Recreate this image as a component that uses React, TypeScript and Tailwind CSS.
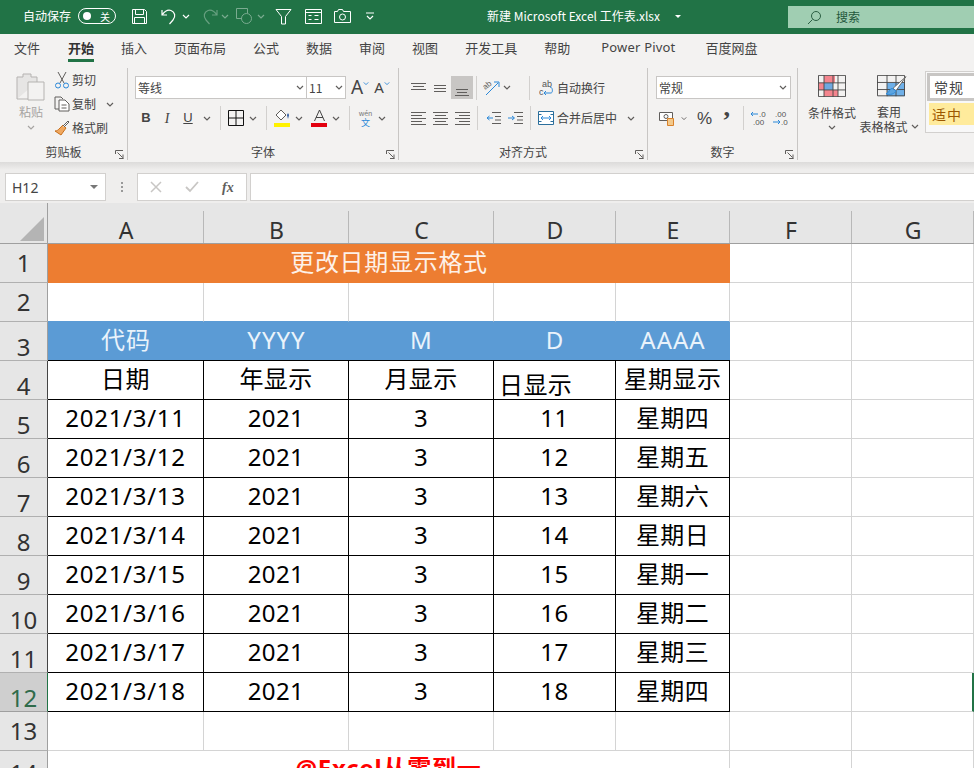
import React from "react";

const font = { fontFamily: '"Noto Sans CJK SC", "Noto Sans", sans-serif' };

const tabs = ["文件", "开始", "插入", "页面布局", "公式", "数据", "审阅", "视图", "开发工具", "帮助"];

const rows = [
  ["2021/3/11", "2021", "3", "11", "星期四"],
  ["2021/3/12", "2021", "3", "12", "星期五"],
  ["2021/3/13", "2021", "3", "13", "星期六"],
  ["2021/3/14", "2021", "3", "14", "星期日"],
  ["2021/3/15", "2021", "3", "15", "星期一"],
  ["2021/3/16", "2021", "3", "16", "星期二"],
  ["2021/3/17", "2021", "3", "17", "星期三"],
  ["2021/3/18", "2021", "3", "18", "星期四"],
];

function Chevron({ className = "", color = "#605e5c" }: { className?: string; color?: string }) {
  return (
    <svg width="8" height="5" viewBox="0 0 8 5" className={className}>
      <path d="M1 1l3 3 3-3" fill="none" stroke={color} strokeWidth="1.2" />
    </svg>
  );
}

function Launcher() {
  return (
    <svg width="9" height="9" viewBox="0 0 9 9" className="absolute right-[3px] top-[7px]">
      <path d="M.5 4V.5H8M8.5 8.5H4M2.5 2.5l5 5M8 4.5v4" fill="none" stroke="#605e5c" strokeWidth="1" />
    </svg>
  );
}

function Group({ width, label, children }: { width: string; label?: string; children: React.ReactNode }) {
  return (
    <div className={`${width} h-[92px] shrink-0 flex flex-col border-r border-[#c8c6c4]`}>
      <div className="h-[75px]">{children}</div>
      <div className="relative h-[17px] flex items-center justify-center text-[12px] text-[#444]">
        {label}
        <Launcher />
      </div>
    </div>
  );
}

function VSep({ className = "" }: { className?: string }) {
  return <div className={`w-px h-[24px] bg-[#d2d0ce] shrink-0 ${className}`} />;
}

// horizontal line icons for the alignment group
function Lines({ lines, className = "" }: { lines: number[][]; className?: string }) {
  return (
    <svg width="16" height="16" viewBox="0 0 16 16" className={`shrink-0 ${className}`}>
      {lines.map(([a, b, y], i) => (
        <path key={i} d={`M${a} ${y + 0.5}H${b}`} stroke="#605e5c" strokeWidth="1" />
      ))}
    </svg>
  );
}

function Indent({ flip = false, className = "" }: { flip?: boolean; className?: string }) {
  return (
    <svg width="16" height="14" viewBox="0 0 16 14" className={className}>
      <path d="M6 1.5h9M9 5.5h6M9 9h6M6 12.5h9" stroke="#605e5c" />
      {flip ? (
        <path d="M0 7h6M4 5l2.500 2L4 9" fill="none" stroke="#2b88d8" />
      ) : (
        <path d="M7 7H1M3.500 5L1 7l2.500 2" fill="none" stroke="#2b88d8" />
      )}
    </svg>
  );
}

function TitleBar() {
  return (
    <div className="h-[34px] bg-[#217346] flex items-center pb-[2px] text-white text-[12px] shrink-0">
      <span className="ml-[23px] w-[48px]">自动保存</span>
      <div className="ml-[7px] w-[38px] h-[16px] rounded-full border border-white flex items-center justify-between pl-[4px] pr-[5px]">
        <div className="w-[8px] h-[8px] rounded-full bg-white" />
        <span className="text-[10px]">关</span>
      </div>
      <svg width="17" height="17" viewBox="0 0 17 17" className="ml-[15px]">
        <path d="M1.500 1.500h12l2 2v12h-14zM4.500 1.500v5h8v-5M3.500 15.500v-6h10v6" fill="none" stroke="#fff" />
      </svg>
      <svg width="17" height="17" viewBox="0 0 17 17" className="ml-[13px]">
        <path d="M1 2v5h5M1.500 6.500C4 3 7 1.500 10 2.500c4 1.500 5 6 2 9.500l-3.500 4" fill="none" stroke="#fff" strokeWidth="1.200" />
      </svg>
      <Chevron className="ml-[4px]" color="#fff" />
      <svg width="17" height="17" viewBox="0 0 17 17" className="ml-[11px] opacity-40">
        <path d="M16 2v5h-5M15.500 6.500C13 3 10 1.500 7 2.500c-4 1.500-5 6-2 9.500l3.500 4" fill="none" stroke="#cfe3d7" strokeWidth="1.200" />
      </svg>
      <Chevron className="ml-[3px] opacity-40" color="#fff" />
      <svg width="18" height="18" viewBox="0 0 18 18" className="ml-[6px] opacity-40">
        <path d="M7 11.500H1.500V1.500h11V6" fill="none" stroke="#fff" />
        <circle cx="11.500" cy="11.500" r="5" fill="none" stroke="#fff" />
      </svg>
      <Chevron className="ml-[4px] opacity-40" color="#fff" />
      <svg width="17" height="17" viewBox="0 0 17 17" className="ml-[10px]">
        <path d="M1 1.500h15l-5.500 7v7.500h-4V8.500z" fill="none" stroke="#fff" />
      </svg>
      <svg width="17" height="15" viewBox="0 0 17 15" className="ml-[13px]">
        <path d="M.5.500h16v14H.5zM.5 3.500h16M3.500 6.500h3M3.500 10.500h3M9.500 6.500h4M9.500 10.500h4" fill="none" stroke="#fff" />
      </svg>
      <svg width="17" height="14" viewBox="0 0 17 14" className="ml-[12px]">
        <path d="M.5 2.500h3l1-2h4l1 2h7v11H.5z" fill="none" stroke="#fff" />
        <circle cx="8.500" cy="8" r="3" fill="none" stroke="#fff" />
      </svg>
      <svg width="8" height="9" viewBox="0 0 8 9" className="ml-[15px]">
        <path d="M0 1h8M1 4l3 3 3-3" fill="none" stroke="#fff" strokeWidth="1.200" />
      </svg>
      <span className="ml-[113px] w-[182px] -mt-[1px] whitespace-nowrap">新建 Microsoft Excel 工作表.xlsx</span>
      <svg width="6" height="3" viewBox="0 0 6 3" className="ml-[6px]">
        <path d="M0 0h6L3 3z" fill="#fff" />
      </svg>
      <div className="ml-[107px] mt-[2px] flex-1 h-[22px] bg-[#a0ceb2] flex items-center text-[#24583c]">
        <svg width="15" height="15" viewBox="0 0 15 15" className="ml-[19px]">
          <circle cx="9" cy="6" r="4.500" fill="none" stroke="#2b5f43" />
          <path d="M5.500 9.500L1 14" stroke="#2b5f43" />
        </svg>
        <span className="ml-[14px]">搜索</span>
      </div>
    </div>
  );
}

function TabRow() {
  return (
    <div className="h-[32px] bg-[#f3f2f1] flex items-start pl-[14px] gap-[27px] pt-[4px] text-[13px] text-[#444] shrink-0">
      {tabs.map((t) => (
        <div key={t} className={t === "开始" ? "ml-px h-[24px] border-b-[3px] border-[#217346] font-bold text-[#333]" : "h-[24px]"}>
          {t}
        </div>
      ))}
      <span className="ml-[4px] tracking-[0.2px] whitespace-nowrap" style={{ fontFamily: '"Noto Sans", sans-serif' }}>
        Power Pivot
      </span>
      <span className="ml-[3px]">百度网盘</span>
    </div>
  );
}

function Clipboard() {
  return (
    <Group width="w-[128px]" label="剪贴板">
      <div className="flex pl-[15px] pt-[3px]">
        <div className="w-[32px] flex flex-col items-center text-[12px] text-[#a6a4a2]">
          <svg width="32" height="32" viewBox="0 0 32 32">
            <path d="M2 28V6h6V3h8v3h6v5" fill="#e6e5e4" stroke="#b5b3b1" />
            <path d="M13 11h16v18H13z" fill="#f3f2f1" stroke="#b5b3b1" />
            <path d="M2 28h11" stroke="#b5b3b1" />
          </svg>
          <span>粘贴</span>
          <Chevron className="mt-[4px]" color="#a6a4a2" />
        </div>
        <div className="ml-[7px] -mt-[3px] flex flex-col text-[12px] text-[#444]">
          <div className="h-[24px] flex items-center">
            <svg width="16" height="18" viewBox="0 0 16 18">
              <path d="M4 1l6 11M12 1L6 12" stroke="#605e5c" />
              <circle cx="4" cy="14.500" r="2.500" fill="none" stroke="#2b88d8" />
              <circle cx="12" cy="14.500" r="2.500" fill="none" stroke="#2b88d8" />
            </svg>
            <span className="ml-[2px]">剪切</span>
          </div>
          <div className="h-[24px] flex items-center">
            <svg width="16" height="16" viewBox="0 0 16 16">
              <path d="M5 13H1V1h6l2 2" fill="none" stroke="#605e5c" />
              <path d="M5 4h6l4 4v7H5z" fill="#fff" stroke="#605e5c" />
              <path d="M7.500 9h5M7.500 12h5" stroke="#605e5c" />
            </svg>
            <span className="ml-[2px]">复制</span>
            <Chevron className="ml-[10px]" />
          </div>
          <div className="h-[24px] flex items-center">
            <svg width="16" height="16" viewBox="0 0 16 16">
              <path d="M9 5l3 3-5 7-6-4c2 0 3-1 4-2z" fill="#f0a860" stroke="#c8701c" />
              <path d="M9 6l5-5 1 1-5 5" fill="#fff" stroke="#605e5c" />
            </svg>
            <span className="ml-[2px]">格式刷</span>
          </div>
        </div>
      </div>
    </Group>
  );
}

function FontGroup() {
  return (
    <Group width="w-[271px]" label="字体">
      <div className="pt-[8px] pl-[7px]">
        <div className="flex items-center h-[23px]">
          <div className="w-[172px] h-[23px] bg-white border border-[#c8c6c4] flex items-center justify-between pl-[2px] pr-[2px] text-[12px] text-[#444]">
            等线
            <Chevron />
          </div>
          <div className="w-[39px] h-[23px] bg-white border border-l-0 border-[#c8c6c4] flex items-center justify-between pl-[2px] pr-[2px] text-[12px] text-[#444]">
            11
            <Chevron />
          </div>
          <span className="ml-[5px] text-[19px] leading-none text-[#444]" style={{ fontFamily: '"Noto Sans", sans-serif' }}>A</span>
          <Chevron className="-mt-[9px] w-[6px]" color="#2b88d8" />
          <span className="ml-[5px] text-[15px] leading-none text-[#444]" style={{ fontFamily: '"Noto Sans", sans-serif' }}>A</span>
          <Chevron className="-mt-[9px] w-[6px]" color="#2b88d8" />
        </div>
        <div className="flex items-center h-[24px] mt-[7px] text-[14px] text-[#444]">
          <span className="ml-[6px] w-[10px] font-bold text-center text-[13px]" style={{ fontFamily: '"Liberation Sans", sans-serif' }}>B</span>
          <span className="ml-[11px] w-[10px] italic text-center text-[14px]" style={{ fontFamily: '"Liberation Serif", serif' }}>I</span>
          <span className="ml-[11px] w-[10px] underline text-center text-[13px]" style={{ fontFamily: '"Liberation Sans", sans-serif' }}>U</span>
          <Chevron className="ml-[10px]" />
          <VSep className="ml-[9px]" />
          <svg width="16" height="16" viewBox="0 0 16 16" className="ml-[7px]">
            <path d="M.5.500h15v15H.5zM8 0v16M0 8h16" fill="none" stroke="#111" />
          </svg>
          <Chevron className="ml-[5px]" />
          <VSep className="ml-[9px]" />
          <svg width="17" height="18" viewBox="0 0 17 18" className="ml-[7px]">
            <path d="M7 1L2 6l5 5 5-5z" fill="#fff" stroke="#605e5c" />
            <path d="M13 6l1 4 1-4-1-2z" fill="#2b579a" />
            <path d="M0 14h16v4H0z" fill="#fff200" />
          </svg>
          <Chevron className="ml-[4px]" />
          <svg width="17" height="18" viewBox="0 0 17 18" className="ml-[8px]">
            <path d="M3.500 12L8.500 1l5 11M5 8.500h7" fill="none" stroke="#444" />
            <path d="M0 14h16v4H0z" fill="#e3000f" />
          </svg>
          <Chevron className="ml-[4px]" />
          <VSep className="ml-[9px]" />
          <div className="ml-[8px] w-[15px] flex flex-col items-center leading-[9px]">
            <span className="text-[7px] text-[#777]">wén</span>
            <span className="text-[9px] text-[#2b88d8]">文</span>
          </div>
          <Chevron className="ml-[5px]" />
        </div>
      </div>
    </Group>
  );
}

function AlignGroup() {
  return (
    <Group width="w-[249px]" label="对齐方式">
      <div className="pt-[8px] pl-[12px] text-[12px] text-[#444]">
        <div className="flex items-center h-[23px]">
          <Lines lines={[[0, 15, 3], [2, 13, 6], [0, 15, 9]]} />
          <Lines className="ml-[5px]" lines={[[2, 14, 5], [2, 14, 8], [2, 14, 11]]} />
          <div className="ml-[3px] w-[22px] h-[23px] bg-[#c8c6c4] flex items-end justify-center pb-[2px]">
            <Lines lines={[[2, 14, 8], [3, 13, 11], [1, 15, 14]]} />
          </div>
          <VSep className="ml-[3px]" />
          <svg width="17" height="17" viewBox="0 0 17 17" className="ml-[6px]">
            <path d="M3 16L15 4M11 3h5v5" fill="none" stroke="#2b88d8" />
            <text x="0" y="9" fontSize="8" fill="#605e5c" transform="rotate(-40 4 7)" fontFamily="Liberation Sans">ab</text>
          </svg>
          <Chevron className="ml-[3px]" />
          <VSep className="ml-[18px]" />
          <svg width="15" height="18" viewBox="0 0 15 18" className="ml-[9px]">
            <text x="3" y="8" fontSize="9" fill="#555" fontFamily="Liberation Sans">ab</text>
            <text x="0" y="16" fontSize="9" fill="#555" fontFamily="Liberation Sans">c</text>
            <path d="M5 14h7c2 0 2-6-1-6M5 14l2-2M5 14l2 2" fill="none" stroke="#2b88d8" />
          </svg>
          <span className="ml-[3px]">自动换行</span>
        </div>
        <div className="flex items-center h-[24px] mt-[7px]">
          <Lines lines={[[0, 15, 2], [0, 11, 5], [0, 15, 8], [0, 11, 11], [0, 15, 14]]} />
          <Lines className="ml-[6px]" lines={[[0, 15, 2], [2, 13, 5], [0, 15, 8], [2, 13, 11], [0, 15, 14]]} />
          <Lines className="ml-[6px]" lines={[[0, 15, 2], [4, 15, 5], [0, 15, 8], [4, 15, 11], [0, 15, 14]]} />
          <VSep className="ml-[6px]" />
          <Indent className="ml-[8px]" />
          <Indent flip className="ml-[6px]" />
          <VSep className="ml-[6px]" />
          <svg width="16" height="16" viewBox="0 0 16 16" className="ml-[7px]">
            <path d="M.5 1.500h15v13H.5zM.5 4.500h3M12.500 4.500h3M.5 11.500h3M12.500 11.500h3" fill="#fff" stroke="#2b6f9c" />
            <path d="M3 8h10M5 6L3 8l2 2M11 6l2 2-2 2" fill="none" stroke="#2b88d8" />
          </svg>
          <span className="ml-[3px]">合并后居中</span>
          <Chevron className="ml-[10px]" />
        </div>
      </div>
    </Group>
  );
}

function NumberGroup() {
  return (
    <Group width="w-[150px]" label="数字">
      <div className="pt-[8px] pl-[8px] text-[#444]">
        <div className="w-[135px] h-[23px] bg-white border border-[#c8c6c4] flex items-center justify-between pl-[2px] pr-[3px] text-[12px]">
          常规
          <Chevron />
        </div>
        <div className="flex items-center h-[24px] mt-[7px]">
          <svg width="17" height="16" viewBox="0 0 17 16" className="ml-[3px]">
            <path d="M.5 2.500h13v8H.5z" fill="#fff" stroke="#605e5c" />
            <circle cx="7" cy="6.500" r="2" fill="none" stroke="#605e5c" />
            <path d="M8.500 8.500h6v7h-6z" fill="#f3c98b" stroke="#d9822b" />
          </svg>
          <Chevron className="ml-[5px] w-[6px]" />
          <span className="ml-[10px] text-[17px] leading-none" style={{ fontFamily: '"Liberation Sans", sans-serif' }}>%</span>
          <span className="ml-[10px] text-[26px] font-bold leading-none mt-[6px]" style={{ fontFamily: '"Liberation Serif", serif' }}>’</span>
          <VSep className="ml-[12px]" />
          <svg width="18" height="16" viewBox="0 0 18 16" className="ml-[6px]">
            <path d="M8 4H1M3 2L1 4l2 2" fill="none" stroke="#2b88d8" />
            <text x="9" y="7" fontSize="8" fill="#555" fontFamily="Liberation Sans">.0</text>
            <text x="3" y="15" fontSize="8" fill="#555" fontFamily="Liberation Sans">.00</text>
          </svg>
          <svg width="18" height="16" viewBox="0 0 18 16" className="ml-[4px]">
            <path d="M1 12h7M6 10l2 2-2 2" fill="none" stroke="#2b88d8" />
            <text x="3" y="7" fontSize="8" fill="#555" fontFamily="Liberation Sans">.00</text>
            <text x="9" y="15" fontSize="8" fill="#555" fontFamily="Liberation Sans">.0</text>
          </svg>
        </div>
      </div>
    </Group>
  );
}

function StylesGroup() {
  return (
    <div className="flex-1 h-[92px] flex text-[12px] text-[#444] overflow-hidden">
      <div className="ml-[10px] w-[48px] flex flex-col items-center pt-[7px] shrink-0">
        <svg width="28" height="22" viewBox="0 0 28 28" preserveAspectRatio="none">
          <path d="M6 1h11v9H6zM1 10h5v9H1zM6 19h14v8H6z" fill="#f4858e" />
          <path d="M6 10h9v9H6z" fill="#6ea8e0" />
          <path d="M.5.500h27v27H.5zM6 0v28M15 0v28M20 0v28M0 10h28M0 19h28" fill="none" stroke="#444" />
        </svg>
        <span className="mt-[7px] whitespace-nowrap">条件格式</span>
        <Chevron className="mt-[3px]" />
      </div>
      <div className="ml-[5px] w-[56px] flex flex-col items-center pt-[7px] shrink-0">
        <svg width="30" height="22" viewBox="0 0 30 28" preserveAspectRatio="none" className="ml-[6px]">
          <path d="M10 10h18v17H10z" fill="#6fb0e8" />
          <path d="M.5.500h27v26H.5zM10 0v27M19 0v27M0 9.500h28M0 18.500h28" fill="none" stroke="#444" />
          <path d="M29 2L16 17l3 3z" fill="#fff" stroke="#605e5c" />
          <path d="M15 17c-3 1-2 5-6 7 4 2 9 0 10-4z" fill="#5ba4e0" stroke="#2b88d8" />
        </svg>
        <span className="mt-[7px] whitespace-nowrap leading-[15px]">套用</span>
        <div className="flex items-center whitespace-nowrap leading-[15px]">
          表格格式
          <Chevron className="ml-[3px]" />
        </div>
      </div>
      <div className="ml-[8px] mt-[3px] flex-1 h-[62px] bg-[#f8f8f8] border border-r-0 border-[#d2d0ce] flex flex-col pl-[1px] pt-px gap-[2px] text-[14px] tracking-[1px]">
        <div className="h-[28px] bg-white flex items-center pl-[4px] border-[3px] border-r-0 border-[#c8c6c4]">常规</div>
        <div className="ml-[2px] h-[22px] bg-[#ffeb9c] flex items-center pl-[3px] text-[#9c5700]">适中</div>
      </div>
    </div>
  );
}

function Ribbon() {
  return (
    <div className="h-[96px] bg-[#f3f2f1] flex items-start pt-[2px] shrink-0">
      <Clipboard />
      <FontGroup />
      <AlignGroup />
      <NumberGroup />
      <StylesGroup />
    </div>
  );
}

function FormulaBar() {
  return (
    <div className="shrink-0 h-[41px] bg-[#efeeed]">
      <div className="h-[8px] bg-gradient-to-b from-[#dcdbda] to-[#efeeed]" />
      <div className="flex items-start pl-[5px] mt-[3px]">
        <div className="w-[101px] h-[28px] bg-white border border-[#d2d0ce] flex items-center justify-between pl-[6px] pr-[7px] text-[14px] text-[#444]" style={{ fontFamily: '"Noto Sans", sans-serif' }}>
          H12
          <svg width="8" height="4" viewBox="0 0 8 4">
            <path d="M0 0h8L4 4z" fill="#777" />
          </svg>
        </div>
        <div className="w-[31px] h-[28px] flex flex-col items-center justify-center gap-[2px]">
          <div className="w-[2px] h-[2px] bg-[#999]" />
          <div className="w-[2px] h-[2px] bg-[#999]" />
          <div className="w-[2px] h-[2px] bg-[#999]" />
        </div>
        <div className="w-[110px] h-[28px] bg-white border border-[#d2d0ce] flex items-center pl-[12px]">
          <svg width="12" height="12" viewBox="0 0 12 12">
            <path d="M1 1l10 10M11 1L1 11" stroke="#c8c6c4" strokeWidth="1.500" />
          </svg>
          <svg width="14" height="12" viewBox="0 0 14 12" className="ml-[23px]">
            <path d="M1 6l4 4 8-9" fill="none" stroke="#c8c6c4" strokeWidth="1.800" />
          </svg>
          <span className="ml-[23px] text-[14px] italic font-bold text-[#605e5c]" style={{ fontFamily: '"Liberation Serif", serif' }}>fx</span>
        </div>
        <div className="ml-[3px] flex-1 h-[28px] bg-white border border-r-0 border-[#d2d0ce]" />
      </div>
    </div>
  );
}

function ColHeader({ label }: { label: string }) {
  return (
    <div className="relative h-full flex items-end justify-center pb-[1px] text-[23px] leading-[24px] text-[#333]">
      {label}
      <div className="absolute right-0 top-[8px] bottom-0 w-px bg-[#b8b8b8]" />
    </div>
  );
}

function RowHeader({ n, shift = true, active = false, dark = true }: { n: number; shift?: boolean; active?: boolean; dark?: boolean }) {
  return (
    <div
      className={`flex justify-center text-[24px] leading-none border-b border-r ${shift ? "items-end pb-[1px]" : "items-center"} ${
        active ? "bg-[#cfcfcf] text-[#2f6b4a] border-r-[#217346] border-b-[#9f9f9f]" : "bg-[#e6e6e6] text-[#333] border-b-[#b0b0b0]"
      } ${!active && dark ? "border-r-[#444]" : ""} ${!active && !dark ? "border-r-[#9f9f9f]" : ""}`}
    >
      {n}
    </div>
  );
}

function Sheet() {
  const gridCell = "border-r border-b border-[#d4d4d4]";
  const blackCell = "flex items-center justify-center pb-[2px] border-r border-b border-black text-[24px] tracking-[0.4px] text-black whitespace-nowrap";
  const dateCell = "flex items-center justify-center pb-[2px] border-r border-b border-black text-[24px] tracking-[0.7px] text-black whitespace-nowrap";
  const blueCell = "flex items-center justify-center pb-[2px] bg-[#5b9bd5] border-b border-black text-[24px] tracking-[1px] text-[#eaf3fb]";
  return (
    <div
      className="grid flex-1 grid-cols-[48px_156px_145px_145px_122px_114px_122px_122px] grid-rows-[41px_repeat(14,39px)] bg-white overflow-hidden"
      style={{ fontFamily: '"Noto Sans", "Noto Sans CJK SC", sans-serif' }}
    >
      {/* header row */}
      <div className="bg-[#e6e6e6] border-b border-r border-[#9f9f9f] flex items-end justify-end pr-[3px] pb-[2px]">
        <svg width="24" height="24" viewBox="0 0 24 24">
          <path d="M24 0v24H0z" fill="#b4b4b4" />
        </svg>
      </div>
      {["A", "B", "C", "D", "E", "F", "G"].map((c) => (
        <div key={c} className="bg-[#e6e6e6] border-b border-[#9f9f9f]">
          <ColHeader label={c} />
        </div>
      ))}

      {/* title */}
      <RowHeader n={1} shift={false} dark={false} />
      <div className="col-span-5 bg-[#ed7d31] flex items-center justify-center pb-[4px] text-[24px] text-[#fdf1e8] tracking-[0.7px]">更改日期显示格式</div>
      <div className={gridCell} />
      <div className={gridCell} />

      {/* empty row */}
      <RowHeader n={2} shift={false} dark={false} />
      {[0, 1, 2, 3, 4].map((i) => (
        <div key={i} className="border-r border-r-[#d4d4d4] border-b border-b-[#5b9bd5]" />
      ))}
      <div className={gridCell} />
      <div className={gridCell} />

      {/* code row */}
      <RowHeader n={3} dark={false} />
      <div className={blueCell}>代码</div>
      <div className={blueCell}>YYYY</div>
      <div className={blueCell}>M</div>
      <div className={blueCell}>D</div>
      <div className={blueCell}>AAAA</div>
      <div className={gridCell} />
      <div className={gridCell} />

      {/* labels */}
      <RowHeader n={4} />
      <div className={blackCell}>日期</div>
      <div className={blackCell}>年显示</div>
      <div className={blackCell}>月显示</div>
      <div className="flex items-end pl-[5px] border-r border-b border-black text-[24px] leading-[28px] tracking-[0.4px] text-black whitespace-nowrap">日显示</div>
      <div className={blackCell}>星期显示</div>
      <div className={gridCell} />
      <div className={gridCell} />

      {rows.map((row, i) => (
        <React.Fragment key={i}>
          <RowHeader n={i + 5} active={i === 7} />
          {row.map((v, j) => (
            <div key={j} className={j === 0 ? dateCell : blackCell}>
              {v}
            </div>
          ))}
          <div className={gridCell} />
          <div className={i === 7 ? "border-b border-b-[#d4d4d4] border-r-2 border-r-[#217346]" : gridCell} />
        </React.Fragment>
      ))}

      <RowHeader n={13} shift={false} dark={false} />
      {[0, 1, 2, 3, 4].map((i) => (
        <div key={i} className={gridCell} />
      ))}
      <div className={gridCell} />
      <div className={gridCell} />

      <div className="bg-[#e6e6e6] border-r border-[#9f9f9f] flex justify-center pt-[10px] text-[24px] leading-none text-[#333]">14</div>
      <div className="col-span-5 border-r border-[#d4d4d4] flex justify-center pt-[2px] text-[24px] leading-[29px] font-bold tracking-[0.8px] text-[#ff0000] whitespace-nowrap">
        @Excel从零到一
      </div>
      <div className="border-r border-[#d4d4d4]" />
      <div className="border-r border-[#d4d4d4]" />
    </div>
  );
}

export default function App() {
  return (
    <div className="w-[974px] h-[768px] flex flex-col overflow-hidden bg-white" style={font}>
      <TitleBar />
      <TabRow />
      <Ribbon />
      <FormulaBar />
      <Sheet />
    </div>
  );
}
